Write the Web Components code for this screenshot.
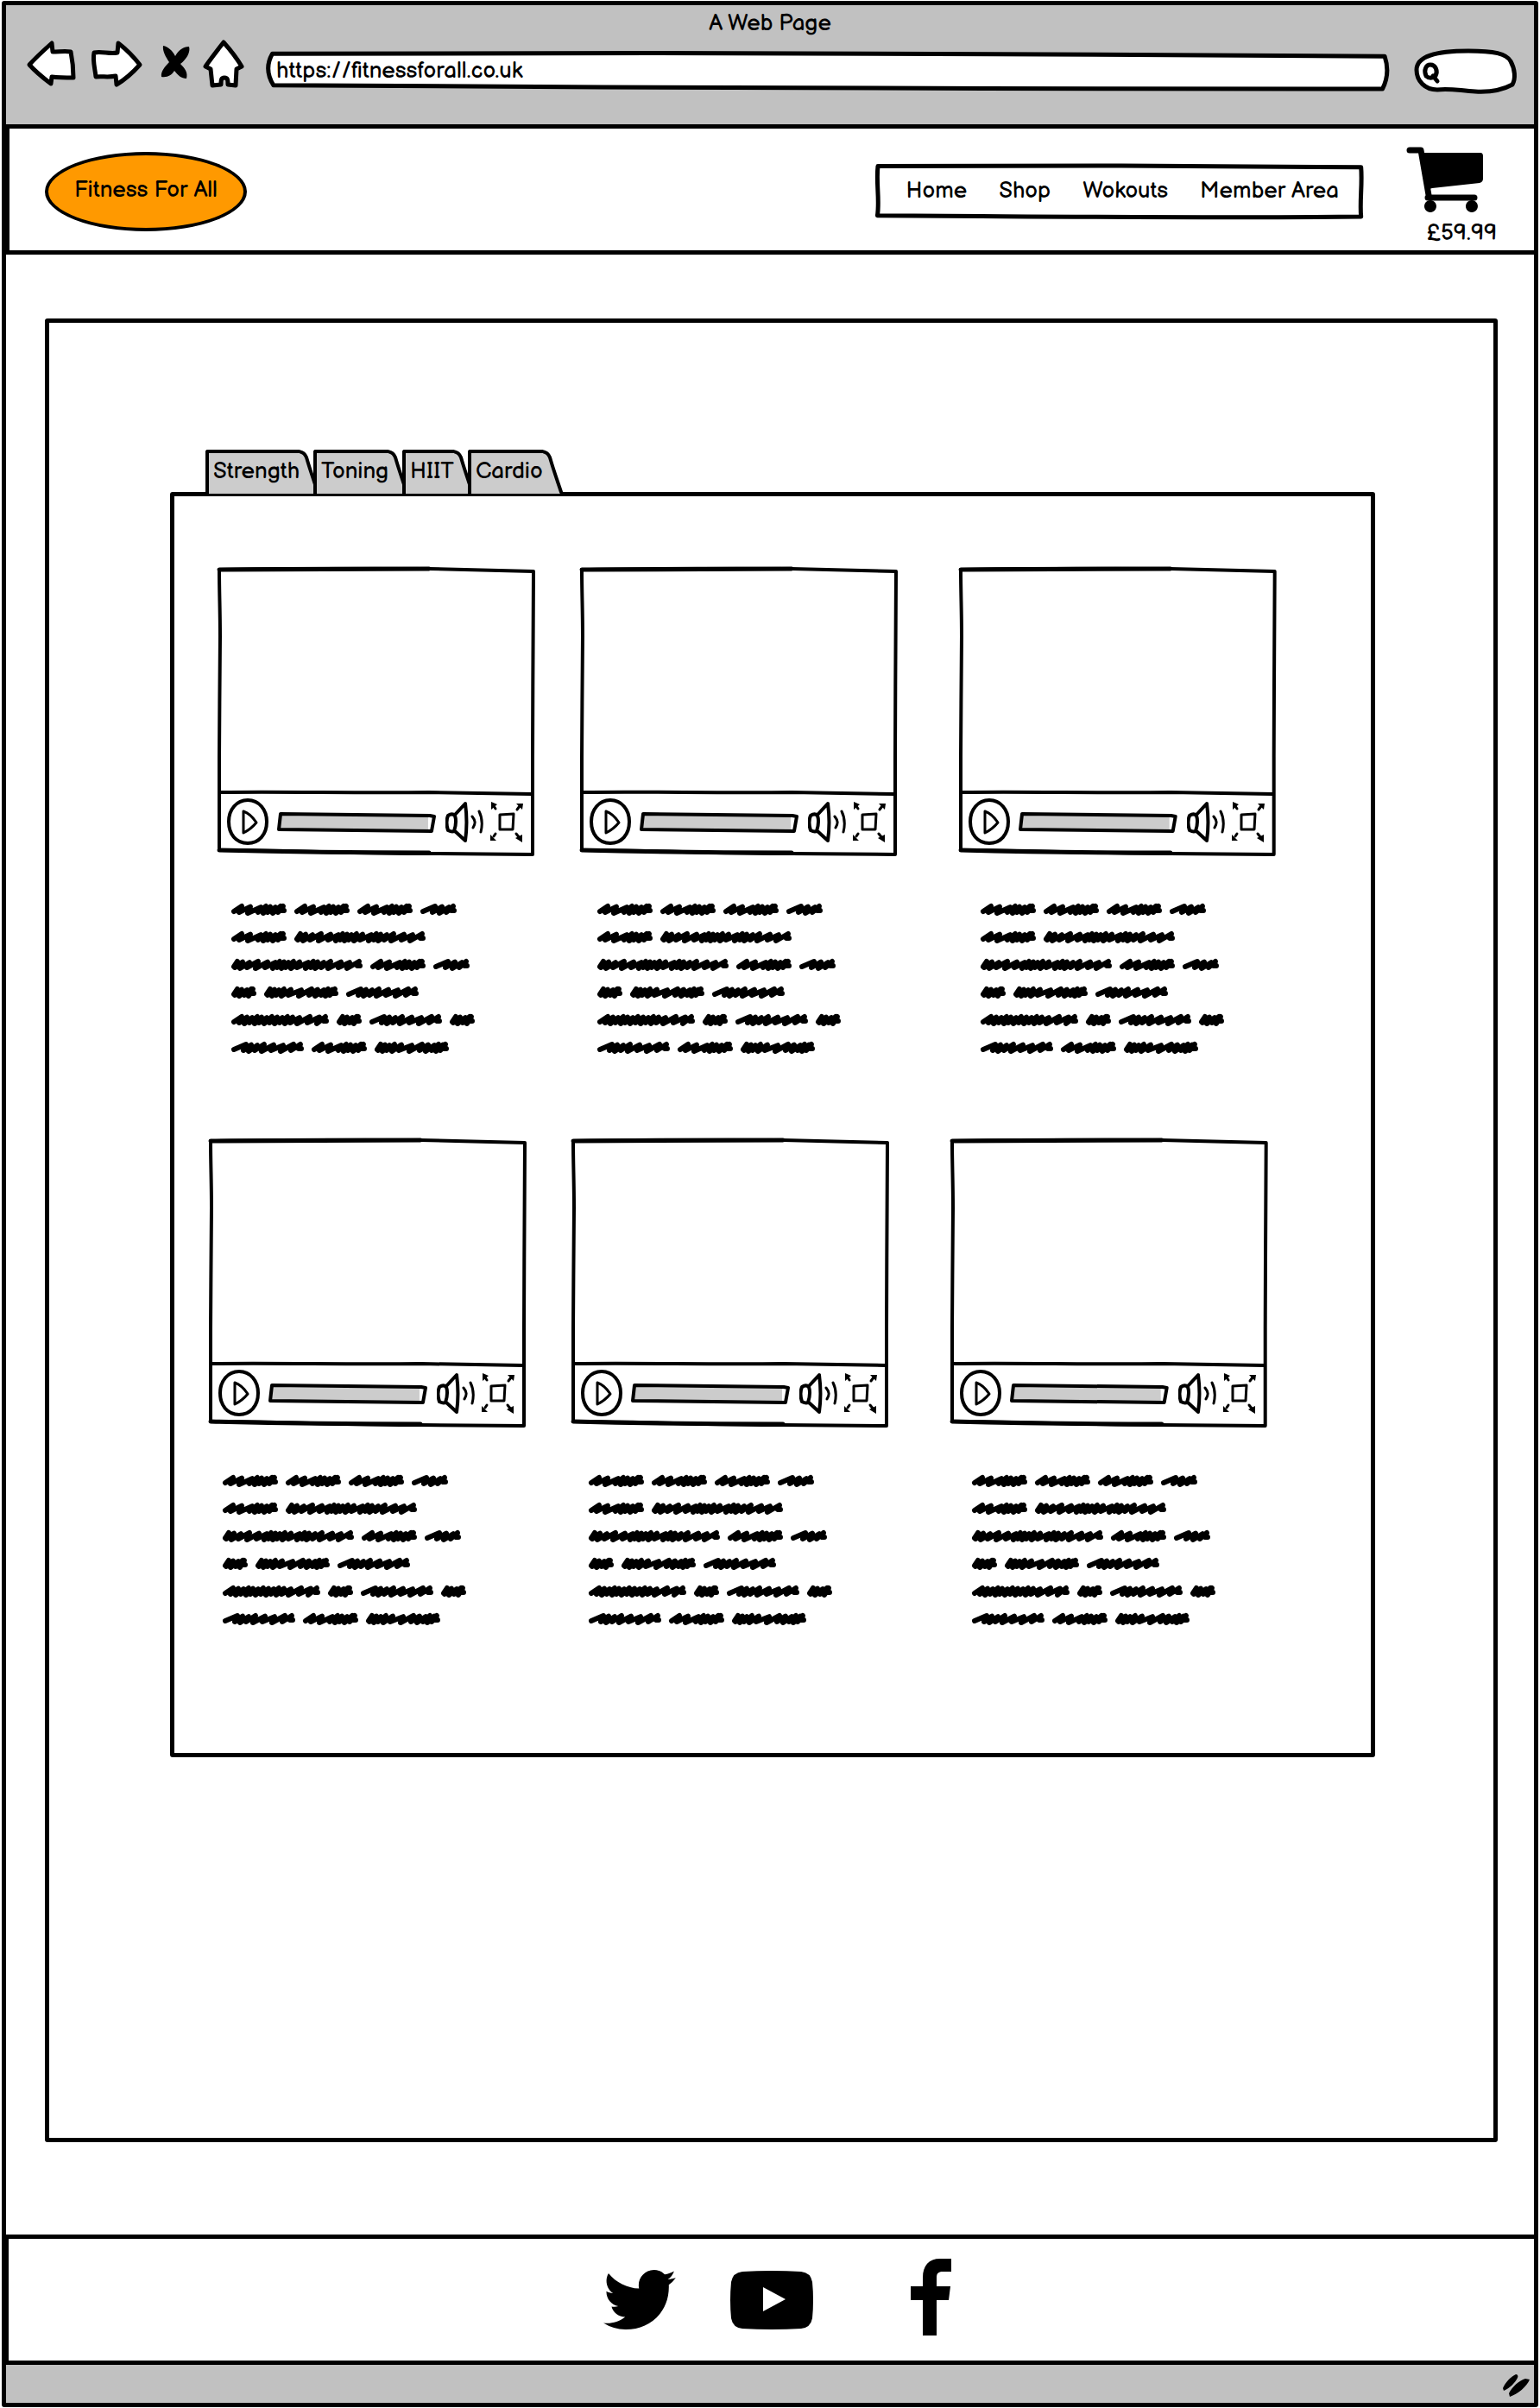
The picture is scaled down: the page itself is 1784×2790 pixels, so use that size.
<!DOCTYPE html>
<html lang="en">
<head>
<meta charset="utf-8">
<meta name="viewport" content="width=device-width, initial-scale=1">
<title>A Web Page</title>
<style>
  body { margin: 0; background: #fff; color: #000; font: 400 26px/32px "Balsamiq Sans", Lato, sans-serif; }
</style>
</head>
<body>
<browser-window heading="A Web Page" address="https://fitnessforall.co.uk">
  <site-header></site-header>
  <site-main>
    <tab-panel>
      <video-row>
        <video-card></video-card><video-card inset="20"></video-card><video-card inset="25"></video-card>
      </video-row>
      <video-row shifted>
        <video-card></video-card><video-card inset="20"></video-card><video-card inset="25"></video-card>
      </video-row>
    </tab-panel>
  </site-main>
  <site-footer></site-footer>
</browser-window>

<script>
const base = `<style>
  :host { display: block; box-sizing: border-box; }
  *, *::before { box-sizing: border-box; }
  svg { display: block; fill: none; stroke: #000; stroke-linejoin: round; stroke-linecap: round; }
  button, input { font: inherit; color: inherit; background: none; border: 0; padding: 0; margin: 0; outline: 0; }
  button { cursor: pointer; }
  a { color: inherit; text-decoration: none; }
</style>`;

function define(name, markup) {
  customElements.define(name, class extends HTMLElement {
    constructor() {
      super();
      const t = document.createElement('template');
      t.innerHTML = base + (typeof markup === 'function' ? markup(this) : markup);
      this.attachShadow({ mode: 'open' }).append(t.content.cloneNode(true));
    }
  });
}

/* Hand-drawn outline that stretches behind whatever is slotted in. */
define('sketch-frame', el => `<style>
  :host { display: grid; }
  svg, .content { grid-area: 1 / 1; min-width: 0; }
  svg { width: 100%; height: 100%; overflow: visible; stroke-width: 5px; fill: #fff; contain: size; }
  path { vector-effect: non-scaling-stroke; }
</style>
<svg viewBox="0 0 100 100" preserveAspectRatio="none" aria-hidden="true"><path d="${el.getAttribute('shape')}"/></svg>
<div class="content"><slot></slot></div>`);

define('browser-window', el => `<style>
  :host { min-height: 100vh; padding: 1px 2px; }
  .frame { min-height: calc(100vh - 2px); border: 5px solid #000; border-radius: 3px; display: flex; flex-direction: column; }
  .bar { background: #c1c1c1; height: 138px; }
  .title { text-align: center; padding-top: 6px; height: 41px; }
  .tools { display: flex; align-items: center; padding: 0 20px 0 25px; height: 54px; }
  .tools button { flex: none; }
  .back { margin-right: 19px; } .next { margin-right: 23px; } .stop { margin-right: 16px; } .home { margin-right: 27px; }
  .url { flex: 1; margin-right: 31px; margin-top: 16px; }
  .url input { width: 100%; height: 42px; padding: 0 11px; display: block; }
  .search { flex: none; display: grid; width: 118px; margin-top: 16px; }
  .search svg, .search input { grid-area: 1 / 1; }
  .search input { width: 100%; padding: 0 12px 0 34px; }
  .page { flex: 1; display: flex; flex-direction: column; }
  .status { flex: none; height: 44px; background: #c1c1c1; display: flex; justify-content: flex-end; align-items: center; padding-right: 5px; padding-top: 4px; }
  .tools svg { stroke-width: 5; fill: #fff; overflow: visible; }
</style>
<div class="frame">
  <div class="bar">
    <div class="title">${el.getAttribute('heading')}</div>
    <div class="tools">
      <button class="back" aria-label="Back"><svg width="55" height="52" viewBox="0 0 55 52"><path d="M2 27C10 18 19 10 28 2L29 12C37 12 44 11 50 12C52 22 53 32 53 42C45 42 37 42 28 41L27 49C19 43 10 36 2 27Z"/></svg></button>
      <button class="next" aria-label="Forward"><svg width="58" height="54" viewBox="0 0 58 54"><path d="M3 14C12 12 21 16 30 14L31 3C40 10 49 19 56 28C48 37 39 45 29 51L28 41C20 43 12 41 5 42C4 32 1 23 3 14Z"/></svg></button>
      <button class="stop" aria-label="Stop"><svg width="33" height="52" viewBox="0 0 33 52"><path fill="#000" stroke="none" d="M2 5C8 6 13 11 16 17C20 10 25 6 32 6C34 12 29 21 22 26C27 31 31 36 29 43C23 43 19 39 15 34C12 39 7 42 0 41C-1 35 4 29 9 24C5 18 1 11 2 5Z"/></svg></button>
      <button class="home" aria-label="Home"><svg width="46" height="54" viewBox="0 0 46 54"><path d="M2 30C9 20 16 11 23 2C31 11 38 20 44 30L38 33L37 52L28 51C28 46 28 43 24 43C20 43 20 46 20 51L10 52L8 33Z"/></svg></button>
      <sketch-frame class="url" shape="M.5 3C20 1 45 0 65 4L99.7 10C100 38 100 70 99.5 100C80 98 50 101 30 95L.6 90C0 60 0 30 .5 3Z"><input type="text" aria-label="Address" value="${el.getAttribute('address')}"></sketch-frame>
      <label class="search">
        <svg width="118" height="50" viewBox="0 0 118 50"><path d="M2 24C2 8 24 2 62 2C92 2 106 5 111 14C116 23 117 34 113 41C102 47 88 50 70 49C52 48 40 45 26 47C12 47 2 37 2 24Z"/><path d="M13 31C10 24 13 18 18 18C24 18 27 25 24 31C21 34 16 34 13 31M21 31L26 37"/></svg>
        <input type="search" aria-label="Search">
      </label>
    </div>
  </div>
  <div class="page"><slot></slot></div>
  <div class="status"><svg width="32" height="28" viewBox="0 0 32 28" aria-hidden="true"><path fill="#000" stroke="none" d="M1 17C4 10 10 4 16 1C18 1 19 3 18 5C15 11 9 17 2 20ZM8 23C12 15 20 8 27 6L32 7C29 15 18 24 9 27Z"/></svg></div>
</div>`);

define('site-header', `<style>
  :host { border: solid #000; border-width: 5px 0 5px 4px; height: 151px; display: flex; align-items: center; padding: 4px 43px 0 41px; }
  .logo { display: grid; place-items: center; width: 234px; height: 92px; border: 4px solid #000; border-radius: 50%; background: #f90; padding-bottom: 1px; flex: none; }
  nav { margin-left: auto; margin-right: 49px; }
  ul { display: flex; gap: 37px; list-style: none; margin: 0; padding: 16px 29px 15px 36px; }
  .cart { align-self: flex-start; padding-top: 17px; flex: none; text-align: right; }
  .cart svg { margin-bottom: 9px; margin-right: 15px; }
  .cart a { display: block; }
</style>
<a class="logo" href="#">Fitness For All</a>
<nav><sketch-frame shape="M.7 4C30 2 70 3 99.5 6C99.8 35 99.2 70 99.5 97C65 100 30 96 .6 95C1.1 65 .3 35 .7 4Z">
  <ul><li><a href="#">Home</a></li><li><a href="#">Shop</a></li><li><a href="#">Wokouts</a></li><li><a href="#">Member Area</a></li></ul>
</sketch-frame></nav>
<div class="cart"><a href="#" aria-label="Basket">
  <svg width="90" height="76" viewBox="0 0 90 76"><path stroke-width="7" d="M4 4H17L26 56M25 59H79"/><path stroke="none" fill="#000" d="M17 7H86Q89 7 89 11V37Q89 41 85 42L30 48L24 50ZM28 62a7 7 0 1 1 -.1 0ZM76 62a7 7 0 1 1 -.1 0Z"/></svg>
</a><span>£59.99</span></div>`);

define('site-main', `<style>
  :host { flex: 1; padding: 74px 42px 107px 45px; display: flex; }
  section { flex: 1; border: 5px solid #000; border-radius: 3px; padding: 147px 137px 439px 140px; }
</style><section><slot></slot></section>`);

define('tab-panel', () => {
  const tab = (t, on) => `<button role="tab" aria-selected="${on}"><span>${t}</span><svg width="23" height="51" viewBox="0 0 23 51"><path fill="#ccc" stroke="none" d="M0 0C5 1 8 4 10 9L21 51H0Z"/><path stroke-width="4" d="M-3 2C3 2 6 4 8 9C12 23 16 34 21 49"/></svg></button>`;
  return `<style>
  .tabs { display: flex; padding-left: 41px; height: 49px; }
  button { display: flex; height: 49px; margin-right: -7px; }
  button span { height: 51px; padding: 6px 0 0 5px; border: solid #000; border-width: 4px 0 0 4px; border-radius: 3px 0 0 0; background: #ccc; text-align: left; }
  .panel { border: 5px solid #000; border-radius: 3px; padding: 82px 0 145px; min-height: 1466px; background: #fff; }
</style>
<div class="tabs" role="tablist">${tab('Strength', true)}${tab('Toning', false)}${tab('HIIT', false)}${tab('Cardio', false)}</div>
<div class="panel" role="tabpanel"><slot></slot></div>`;
});

define('video-row', `<style>
  :host { display: grid; grid-template-columns: 420fr 440fr 368fr; padding: 0 109px 0 50px; height: 662px; }
  :host([shifted]) { padding: 0 119px 0 40px; height: auto; }
</style><slot></slot>`);

define('video-card', el => `<style>
  :host { max-width: 368px; min-width: 0; }
  .player { display: grid; height: 335px; margin-bottom: 55px; }
  .player > svg, .ui { grid-area: 1 / 1; min-width: 0; }
  .player > svg { width: 100%; height: 100%; overflow: visible; stroke-width: 4; }
  .player > svg path { vector-effect: non-scaling-stroke; }
  .ui { display: flex; flex-direction: column; justify-content: flex-end; }
  .controls { display: flex; align-items: center; height: 76px; padding: 0 13px 4px 11px; }
  .seek { flex: 1; display: grid; margin: 0 11px 0 10px; }
  .seek svg, .seek input { grid-area: 1 / 1; min-width: 0; width: 100%; height: 25px; }
  .seek input { appearance: none; opacity: 0; }
  .volume { margin-right: 7px; }
  scribble-text { margin-left: ${el.getAttribute('inset') || 16}px; }
</style>
<div class="player">
  <svg viewBox="0 0 368 335" preserveAspectRatio="none" aria-hidden="true"><path d="M2 3C80 1 160 2 245 2L366 5C366 60 365 150 365 220L365 333L245 332C160 332 80 328 2 328L2 220C2 180 3 110 3 80C3 50 2 30 2 3ZM2 261C80 260 160 262 245 261L364 263"/><path stroke-width="5" d="M2 3C80 2 160 2 245 2M2 328C80 330 160 331 245 331"/></svg>
  <div class="ui"><div class="controls">
    <button aria-label="Play"><svg width="48" height="54" viewBox="0 0 48 54" stroke-width="4"><path d="M24 2C37 2 46 13 46 27C46 42 37 52 24 52C10 52 2 41 2 27C2 13 11 2 24 2Z"/><path stroke-width="3" d="M19 15V40C25 37 30 33 34 28C30 22 25 17 19 15Z"/></svg></button>
    <label class="seek"><svg viewBox="0 0 183 25" preserveAspectRatio="none" stroke-width="4"><path fill="#ccc" stroke="none" d="M3 3L174 5V22L2 21Z"/><path d="M4 3L176 5L181 6L178 23L2 21Z"/></svg><input type="range" value="97" aria-label="Seek"></label>
    <button class="volume" aria-label="Volume"><svg width="44" height="48" viewBox="0 0 44 48" stroke-width="4"><path d="M3 17C6 15 9 15 11 17C13 23 12 29 10 35C8 36 5 35 3 34C1 28 1 22 3 17ZM11 16L23 3C25 18 25 32 23 46L11 35"/><path stroke-width="3" d="M31 18C35 23 35 26 32 31M39 12C43 20 43 28 41 36"/></svg></button>
    <button aria-label="Full screen"><svg width="40" height="48" viewBox="0 0 40 48" stroke-width="3"><path d="M12 16L28 15L27 33L12 33Z"/><path stroke-width="3" d="M7 9L5 6M32 10L35 6M7 38L5 41M31 38L35 43"/><path stroke="none" fill="#000" d="M2 1L9 4L2 10ZM31 3L39 3L38 10ZM1 39L8 46L1 46ZM30 43L38 39V48Z"/></svg></button>
  </div></div>
</div>
<scribble-text></scribble-text>`);

/* Scribbled filler copy: each word is a fixed run of slanted pen strokes. */
const zig = (width, xs) => {
  let d = 'M3 9';
  xs.forEach((x, i) => { d += `L${x + 3} ${3 + i % 3 * .6}L${x} ${10 + i % 2}`; });
  return { width, d: d + `L${width - 4} 3L${width - 6} 8L${width - 3} 8` };
};
const words = {
  A: zig(64, [9, 19, 31, 37, 42, 48, 54]),
  B: zig(152, [4, 10, 18, 28, 39, 48, 53, 58, 63, 69, 76, 86, 92, 97, 104, 112, 124, 134]),
  C: zig(29, [4, 9, 15, 20]),
  D: zig(42, [14, 22, 30]),
  E: zig(86, [4, 9, 14, 20, 28, 40, 52, 59, 66, 71, 76]),
  F: zig(84, [14, 20, 27, 35, 46, 57, 69]),
  G: zig(113, [9, 15, 21, 27, 32, 38, 44, 50, 56, 62, 68, 76, 88, 99])
};
const lines = ['AAAD', 'AB', 'BAD', 'CEF', 'GCFC', 'FAE'];
define('scribble-text', () => `<style>
  :host { display: flex; flex-direction: column; gap: 18px; }
  div { display: flex; gap: 9px; height: 14px; }
  svg { flex: none; stroke-width: 6; overflow: visible; }
</style>` + lines.map(l => `<div aria-hidden="true">${[...l].map(k => `<svg width="${words[k].width}" height="14"><path d="${words[k].d}"/></svg>`).join('')}</div>`).join(''));

define('site-footer', `<style>
  :host { border: solid #000; border-width: 5px 0 5px 3px; height: 151px; display: flex; justify-content: center; align-items: center; padding-left: 14px; }
  svg { fill: #000; stroke: none; }
  .yt { margin: 0 113px 0 63px; }
  .fb { margin-bottom: 6px; }
</style>
<a href="#" aria-label="Twitter"><svg width="84" height="69" viewBox="0 0 24 19.5" preserveAspectRatio="none"><path d="M23.95 2.6a10 10 0 0 1-2.3 2.3C22 13.8 15.3 19.5 7.5 19.5A14 14 0 0 1 0 17.4c2.7.3 5.1-.4 7.2-2-2.2-.1-4-1.400-4.500-3.400.8.1 1.500.1 2.200-.1-2.300-.5-4-2.500-3.900-4.900.6.4 1.400.6 2.200.6C1 6.200.4 3.300 1.700 1.100c2.500 3 6.100 4.800 10.100 5-.7-3 1.600-6.100 4.900-6.100 1.400 0 2.700.6 3.600 1.500 1.100-.2 2.200-.6 3.100-1.100-.4 1.100-1.100 2.100-2.100 2.700 1-.1 1.800-.3 2.650-.5Z"/></svg></a>
<a class="yt" href="#" aria-label="YouTube"><svg width="96" height="68" viewBox="0 0 96 68"><path fill-rule="evenodd" d="M14 1Q48-1 82 1Q93 2 95 13Q97 34 95 55Q93 66 82 67Q48 69 14 67Q3 66 1 55Q-1 34 1 13Q3 2 14 1ZM38 19V47L64 33Z"/></svg></a>
<a class="fb" href="#" aria-label="Facebook"><svg width="47" height="89" viewBox="0 0 47 89"><path d="M14 89V48H0V32H14V22C14 8 21 0 34 0H47V15H37C32 15 30 17 30 22V32H46L44 48H30V89Z"/></svg></a>`);
</script>
</body>
</html>
